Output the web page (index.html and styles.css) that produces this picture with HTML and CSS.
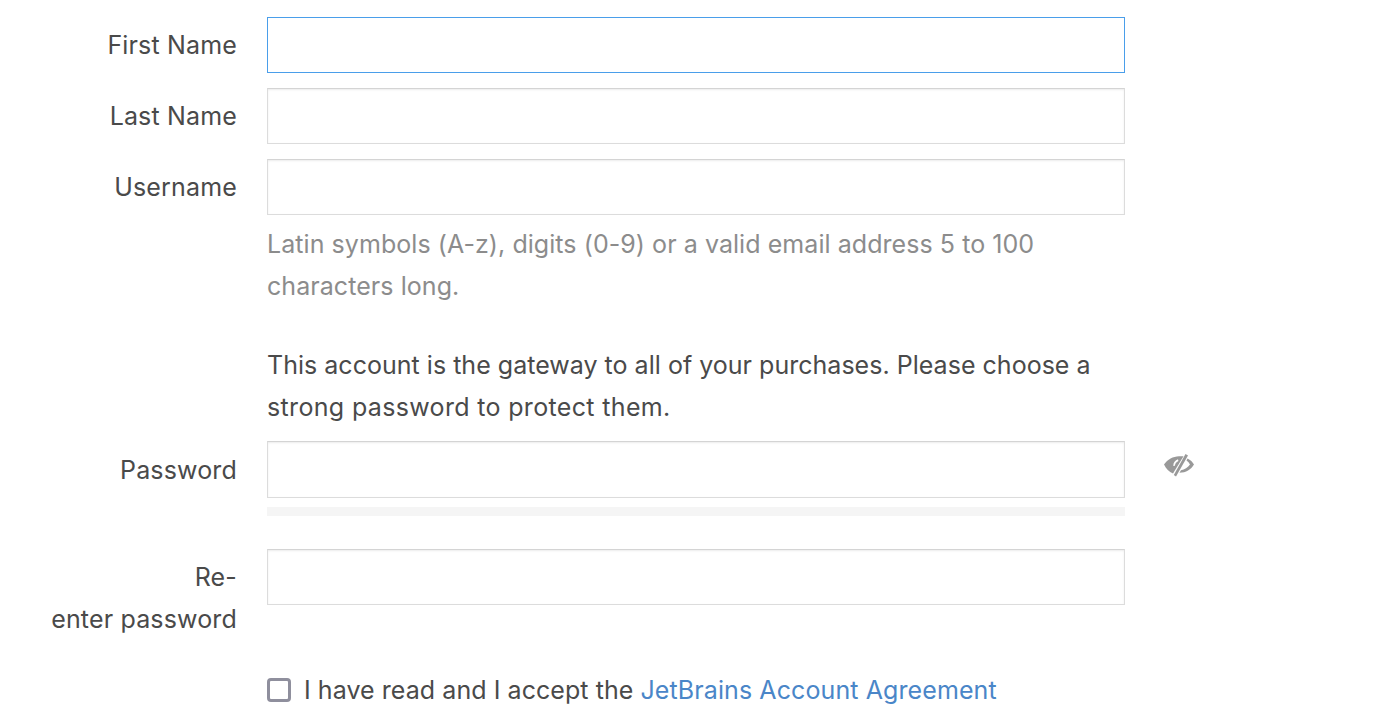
FILE: index.html
```html
<!DOCTYPE html>
<html lang="en">
<head>
<meta charset="utf-8">
<title>Create account</title>
<link rel="stylesheet" href="styles.css">
</head>
<body>
<form class="form">
  <div class="row">
    <label class="label">First Name</label>
    <div class="field"><div class="input input-focus"></div></div>
  </div>
  <div class="row">
    <label class="label">Last Name</label>
    <div class="field"><div class="input"></div></div>
  </div>
  <div class="row">
    <label class="label">Username</label>
    <div class="field">
      <div class="input"></div>
      <p class="hint">Latin symbols (A-z), digits (0-9) or a valid email address 5 to 100 characters long.</p>
    </div>
  </div>
  <div class="row row-note">
    <span class="label"></span>
    <p class="note"><span class="note-first">This account is the gateway to all of your purchases. Please choose a</span> <span class="note-second">strong password to protect them.</span></p>
  </div>
  <div class="row row-password">
    <label class="label">Password</label>
    <div class="field">
      <div class="input"></div>
      <div class="meter"></div>
    </div>
    <svg class="eye" viewBox="0 0 32 24" width="32" height="24" aria-hidden="true">
      <path d="M1 11.500C4.500 6.500 10 3.500 16 3.300h4.500L10 20.500C6 19 3 15.500 1 11.500z" fill="#999"/>
      <path d="M22.500 1L25 2.500 13 23.500 10.800 22z" fill="#999"/>
      <path d="M24.500 5.500C27.500 6.800 29.500 9 31 11.500 28 16.500 23 19.700 16.500 19.800L18 17.200C21.500 16.500 25 14.500 27 11.500 26.200 10 25 8.600 23.500 7.500z" fill="#999"/>
      <path d="M15 6.300c-2.800.9-4.800 3.200-4.700 6.800l1.600-.3c.1-2 1.300-3.900 3.500-4.900z" fill="#fff"/>
    </svg>
  </div>
  <div class="row row-repeat">
    <label class="label">Re-<br>enter password</label>
    <div class="field"><div class="input"></div></div>
  </div>
  <div class="row row-accept">
    <span class="label"></span>
    <label class="accept"><span class="checkbox"></span><span>I have read and I accept the <a class="link" href="#">JetBrains Account Agreement</a></span></label>
  </div>
</form>
</body>
</html>
```

FILE: styles.css
```css
html, body {
  margin: 0;
  background: #fff;
  height: 728px;
  overflow: hidden;
}
.form {
  display: flex;
  flex-direction: column;
  padding-top: 17px;
  font-family: Inter, "Liberation Sans", sans-serif;
  font-size: 25px;
  letter-spacing: 0.06px;
  line-height: 42px;
  color: #4a4a4a;
}
.row {
  display: flex;
  gap: 30px;
  margin-bottom: 15px;
}
.label {
  flex: 0 0 237px;
  text-align: right;
  padding-top: 7px;
  letter-spacing: 0.16px;
}
.field {
  flex: 0 0 858px;
}
.input {
  box-sizing: border-box;
  height: 56px;
  background: #fff;
  border: 1px solid #dcdcdc;
  border-top-color: #d4d4d4;
  box-shadow: inset 0 1px 2px rgba(0, 0, 0, 0.08);
}
.input-focus {
  border-color: #4a9eea;
  box-shadow: none;
}
.hint {
  margin: 8px 0 0;
  color: #8c8c8c;
}
.note {
  flex: 0 0 858px;
  margin: 0;
}
.note-first {
  letter-spacing: 0.02px;
}
.note-second {
  letter-spacing: 0.34px;
}
.row-note {
  margin-top: 22px;
  margin-bottom: 13px;
}
.row-note .label {
  padding-top: 0;
}
.row-password {
  margin-bottom: 33px;
}
.row-password .label {
  padding-top: 8px;
}
.row-password .input {
  height: 57px;
}
.meter {
  height: 9px;
  margin-top: 9px;
  background: #f5f5f5;
}
.eye {
  margin: 12px 0 0 8px;
}
.row-repeat {
  margin-bottom: 29px;
}
.row-accept .label {
  padding-top: 0;
}
.accept {
  display: flex;
  align-items: center;
  gap: 13px;
  height: 42px;
}
.checkbox {
  box-sizing: border-box;
  width: 24px;
  height: 24px;
  border: 3px solid #8f8f9d;
  border-radius: 4px;
  background: #fff;
}
.link {
  color: #4a86c8;
  text-decoration: none;
  letter-spacing: 0.1px;
}
```
